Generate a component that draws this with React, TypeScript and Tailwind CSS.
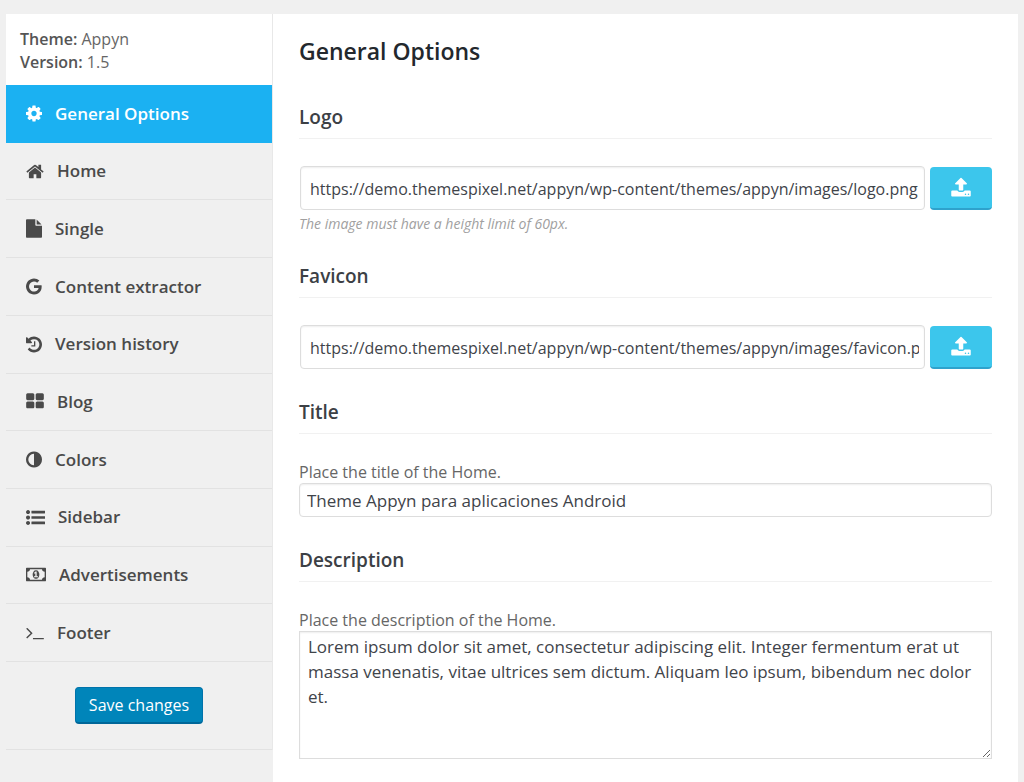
import { useState } from 'react'
import type { ReactNode } from 'react'
import { clsx } from 'clsx'

type IconProps = {
  d: string
  viewBox: string
  className?: string
}

function Icon({ d, viewBox, className }: IconProps) {
  return (
    <svg viewBox={viewBox} fill="currentColor" aria-hidden="true" className={clsx('shrink-0', className)}>
      <path d={d} />
    </svg>
  )
}

const uploadPath =
  'M1344 1472q0-26-19-45t-45-19-45 19-19 45 19 45 45 19 45-19 19-45zm256 0q0-26-19-45t-45-19-45 19-19 45 19 45 45 19 45-19 19-45zm128-224v320q0 40-28 68t-68 28h-1472q-40 0-68-28t-28-68v-320q0-40 28-68t68-28h427q21 56 70.5 92t110.5 36h256q61 0 110.5-36t70.5-92h427q40 0 68 28t28 68zm-325-648q-17 40-59 40h-256v448q0 26-19 45t-45 19h-256q-26 0-45-19t-19-45v-448h-256q-42 0-59-40-17-39 14-69l448-448q18-19 45-19t45 19l448 448q31 30 14 69z'

const items = [
  {
    label: 'General Options',
    viewBox: '128 0 1536 1792',
    size: 'w-4',
    d: 'M1152 896q0-106-75-181t-181-75-181 75-75 181 75 181 181 75 181-75 75-181zm512-109v222q0 12-8 23t-20 13l-185 28q-19 54-39 91 35 50 107 138 10 12 10 25t-9 23q-27 37-99 108t-94 71q-12 0-26-9l-138-108q-44 23-91 38-16 136-29 186-7 28-36 28h-222q-14 0-24.5-8.5t-11.5-21.5l-28-184q-49-16-90-37l-141 107q-10 9-25 9-14 0-25-11-126-114-165-168-7-10-7-23 0-12 8-23 15-21 51-66.5t54-70.5q-27-50-41-99l-183-27q-13-2-21-12.5t-8-23.5v-222q0-12 8-23t19-13l186-28q14-46 39-92-40-57-107-138-10-12-10-24 0-10 9-23 26-36 98.5-107.5t94.5-71.5q13 0 26 10l138 107q44-23 91-38 16-136 29-186 7-28 36-28h222q14 0 24.5 8.5t11.5 21.5l28 184q49 16 90 37l142-107q9-9 24-9 13 0 25 10 129 119 165 170 7 8 7 22 0 12-8 23-15 21-51 66.5t-54 70.5q26 50 41 98l183 28q13 2 21 12.5t8 23.5z',
  },
  {
    label: 'Home',
    viewBox: '64 0 1664 1792',
    size: 'w-[18px]',
    d: 'M1472 992v480q0 26-19 45t-45 19h-384v-384h-256v384h-384q-26 0-45-19t-19-45v-480q0-1 .5-3t.5-3l575-474 575 474q1 2 1 6zm223-69l-62 74q-8 9-21 11h-3q-13 0-21-7l-692-577-692 577q-12 8-24 7-13-2-21-11l-62-74q-8-10-7-23.5t11-21.5l719-599q32-26 76-26t76 26l244 204v-195q0-14 9-23t23-9h192q14 0 23 9t9 23v408l219 182q10 8 11 21.5t-7 23.5z',
  },
  {
    label: 'Single',
    viewBox: '128 0 1536 1792',
    size: 'w-4',
    d: 'M1152 512v-472q22 14 36 28l408 408q14 14 28 36h-472zm-128 32q0 40 28 68t68 28h544v1056q0 40-28 68t-68 28h-1344q-40 0-68-28t-28-68v-1600q0-40 28-68t68-28h800v544z',
  },
  {
    label: 'Content extractor',
    viewBox: '128 0 1536 1792',
    size: 'w-4',
    d: 'M896 786h725q12 67 12 128 0 217-91 387.5t-259.5 266.5-386.5 96q-157 0-299-60.5t-245-163.5-163.5-245-60.5-299 60.5-299 163.5-245 245-163.5 299-60.5q300 0 515 201l-209 201q-123-119-306-119-129 0-238.5 65t-173.5 176.5-64 243.5 64 243.5 173.5 176.5 238.5 65q87 0 160-24t120-60 82-82 51.5-87 22.5-78h-436v-264z',
  },
  {
    label: 'Version history',
    viewBox: '128 0 1536 1792',
    size: 'w-4',
    d: 'M1664 896q0 156-61 298t-164 245-245 164-298 61q-172 0-327-72.5t-264-204.5q-7-10-6.5-22.5t8.5-20.5l137-138q10-9 25-9 16 2 23 12 73 95 179 147t225 52q104 0 198.5-40.5t163.5-109.5 109.5-163.5 40.5-198.5-40.5-198.5-109.5-163.5-163.5-109.5-198.5-40.5q-98 0-188 35.5t-160 101.5l137 138q31 30 14 69-17 40-59 40h-448q-26 0-45-19t-19-45v-448q0-42 40-59 39-17 69 14l130 129q107-101 244.5-156.5t284.5-55.5q156 0 298 61t245 164 164 245 61 298zm-640-288v448q0 14-9 23t-23 9h-320q-14 0-23-9t-9-23v-64q0-14 9-23t23-9h224v-352q0-14 9-23t23-9h64q14 0 23 9t9 23z',
  },
  {
    label: 'Blog',
    viewBox: '64 0 1664 1792',
    size: 'w-[18px]',
    d: 'M832 1024v384q0 52-38 90t-90 38h-512q-52 0-90-38t-38-90v-384q0-52 38-90t90-38h512q52 0 90 38t38 90zm0-768v384q0 52-38 90t-90 38h-512q-52 0-90-38t-38-90v-384q0-52 38-90t90-38h512q52 0 90 38t38 90zm896 768v384q0 52-38 90t-90 38h-512q-52 0-90-38t-38-90v-384q0-52 38-90t90-38h512q52 0 90 38t38 90zm0-768v384q0 52-38 90t-90 38h-512q-52 0-90-38t-38-90v-384q0-52 38-90t90-38h512q52 0 90 38t38 90z',
  },
  {
    label: 'Colors',
    viewBox: '128 0 1536 1792',
    size: 'w-4',
    d: 'M896 1440v-1088q-148 0-273 73t-198 198-73 273 73 273 198 198 273 73zm768-544q0 209-103 385.5t-279.5 279.5-385.5 103-385.5-103-279.5-279.5-103-385.5 103-385.5 279.5-279.5 385.5-103 385.5 103 279.5 279.5 103 385.5z',
  },
  {
    label: 'Sidebar',
    viewBox: '0 0 1792 1792',
    size: 'w-[19px]',
    d: 'M384 1408q0 80-56 136t-136 56-136-56-56-136 56-136 136-56 136 56 56 136zm0-512q0 80-56 136t-136 56-136-56-56-136 56-136 136-56 136 56 56 136zm1408 416v192q0 13-9.5 22.5t-22.5 9.5h-1216q-13 0-22.5-9.5t-9.5-22.5v-192q0-13 9.5-22.5t22.5-9.5h1216q13 0 22.5 9.5t9.5 22.5zm-1408-928q0 80-56 136t-136 56-136-56-56-136 56-136 136-56 136 56 56 136zm1408 416v192q0 13-9.5 22.5t-22.5 9.5h-1216q-13 0-22.5-9.5t-9.5-22.5v-192q0-13 9.5-22.5t22.5-9.5h1216q13 0 22.5 9.5t9.5 22.5zm0-512v192q0 13-9.5 22.5t-22.5 9.5h-1216q-13 0-22.5-9.5t-9.5-22.5v-192q0-13 9.5-22.5t22.5-9.5h1216q13 0 22.5 9.5t9.5 22.5z',
  },
  {
    label: 'Advertisements',
    viewBox: '0 0 1920 1792',
    size: 'w-5',
    d: 'M768 1152h384v-96h-128v-448h-114l-148 137 77 80q42-37 55-57h2v288h-128v96zm512-256q0 70-21 142t-59.5 134-101.5 101-138 39-138-39-101.5-101-59.5-134-21-142 21-142 59.5-134 101.5-101 138-39 138 39 101.5 101 59.5 134 21 142zm512 256v-512q-106 0-181-75t-75-181h-1152q0 106-75 181t-181 75v512q106 0 181 75t75 181h1152q0-106 75-181t181-75zm128-832v1152q0 26-19 45t-45 19h-1792q-26 0-45-19t-19-45v-1152q0-26 19-45t45-19h1792q26 0 45 19t19 45z',
  },
  {
    label: 'Footer',
    viewBox: '64 0 1664 1792',
    size: 'w-[18px]',
    d: 'M649 983l-466 466q-10 10-23 10t-23-10l-50-50q-10-10-10-23t10-23l393-393-393-393q-10-10-10-23t10-23l50-50q10-10 23-10t23 10l466 466q10 10 10 23t-10 23zm1079 457v64q0 14-9 23t-23 9h-960q-14 0-23-9t-9-23v-64q0-14 9-23t23-9h960q14 0 23 9t9 23z',
  },
]

const fieldClass =
  'border border-[#dddddd] bg-white text-[#3f444a] shadow-[inset_0_1px_2px_rgba(0,0,0,0.07)] outline-none focus:border-[#5b9dd9]'

function Section({ title, children }: { title: string; children: ReactNode }) {
  return (
    <section>
      <h2 className="border-b border-[#f1f1f1] pb-[7px] text-[19px] leading-7 font-semibold text-[#3c4045]">{title}</h2>
      <div className="mt-[27px]">{children}</div>
    </section>
  )
}

function UploadField({ label, value }: { label: string; value: string }) {
  return (
    <div className="flex items-end gap-[5px] pl-px">
      <input
        type="text"
        aria-label={label}
        defaultValue={value}
        className={clsx(fieldClass, 'h-11 min-w-0 flex-1 rounded-[4px] pt-0.5 pr-[5px] pl-[9px] text-base')}
      />
      <button
        type="button"
        aria-label={`Upload ${label}`}
        className="flex h-[43px] w-[62px] shrink-0 items-center justify-center rounded-[4px] border-b-2 border-[#2ea2cc] bg-[#3cc6ec] text-white hover:bg-[#2fbbe2]"
      >
        <Icon d={uploadPath} viewBox="64 0 1664 1792" className="h-[21px] w-5" />
      </button>
    </div>
  )
}

export default function App() {
  const [active, setActive] = useState('General Options')

  return (
    <div className="flex min-h-screen items-stretch bg-[#f0f0f0] px-[6px] pt-[14px] font-['Open_Sans','Noto_Sans',sans-serif] text-[#444444]">
      <aside className="w-[267px] shrink-0">
        <div className="border-r border-[#e8e8e8]">
          <div className="bg-white px-[14px] pt-[14px] pb-[11px] text-base leading-[23px] text-[#666666]">
            <p>
              <strong className="font-semibold text-[#555555]">Theme:</strong> Appyn
            </p>
            <p>
              <strong className="font-semibold text-[#555555]">Version:</strong> 1.5
            </p>
          </div>
          <nav>
            <ul className="grid min-h-[577px] auto-rows-fr">
              {items.map((item) => (
                <li key={item.label}>
                  <a
                    href="#"
                    onClick={() => setActive(item.label)}
                    className={clsx(
                      'flex h-full items-center gap-[13px] border-b px-5 text-[17px] font-semibold',
                      active === item.label
                        ? 'border-[#1bb1f2] bg-[#1bb1f2] text-white'
                        : 'border-[#e2e2e2] text-[#4a4a4a] hover:bg-[#e8e8e8]'
                    )}
                  >
                    <Icon d={item.d} viewBox={item.viewBox} className={clsx('h-[19px]', item.size)} />
                    {item.label}
                  </a>
                </li>
              ))}
            </ul>
          </nav>
          <div className="flex justify-center border-b border-[#e2e2e2] py-[25px]">
            <button
              type="submit"
              form="options"
              className="h-[37px] rounded-[4px] border border-b-2 border-[#0073aa] border-b-[#006799] bg-[#0085ba] px-[13px] text-base text-white hover:bg-[#008ec2]"
            >
              Save changes
            </button>
          </div>
        </div>
      </aside>

      <main className="min-w-0 flex-1 bg-white px-[26px] pt-[21px] pb-[23px]">
        <h1 className="text-[23px] leading-8 font-semibold text-[#23282d]">General Options</h1>
        <form id="options" onSubmit={(e) => e.preventDefault()} className="mt-9 flex flex-col gap-[29px]">
          <Section title="Logo">
            <UploadField
              label="Logo"
              value="https://demo.themespixel.net/appyn/wp-content/themes/appyn/images/logo.png"
            />
            <p className="mt-1 text-sm leading-[19px] text-[#a0a0a0] italic">The image must have a height limit of 60px.</p>
          </Section>

          <Section title="Favicon">
            <UploadField
              label="Favicon"
              value="https://demo.themespixel.net/appyn/wp-content/themes/appyn/images/favicon.png"
            />
          </Section>

          <Section title="Title">
            <label htmlFor="title" className="block text-base leading-[22px] text-[#666666]">
              Place the title of the Home.
            </label>
            <input
              id="title"
              type="text"
              defaultValue="Theme Appyn para aplicaciones Android"
              className={clsx(fieldClass, 'block h-[34px] w-full rounded-[4px] px-[7px] text-[17px]')}
            />
          </Section>

          <Section title="Description">
            <label htmlFor="description" className="block text-base leading-[22px] text-[#666666]">
              Place the description of the Home.
            </label>
            <textarea
              id="description"
              defaultValue="Lorem ipsum dolor sit amet, consectetur adipiscing elit. Integer fermentum erat ut massa venenatis, vitae ultrices sem dictum. Aliquam leo ipsum, bibendum nec dolor et."
              className={clsx(fieldClass, 'block h-32 w-full resize px-2 py-0.5 text-[17px] leading-[25px]')}
            />
          </Section>
        </form>
      </main>
    </div>
  )
}
